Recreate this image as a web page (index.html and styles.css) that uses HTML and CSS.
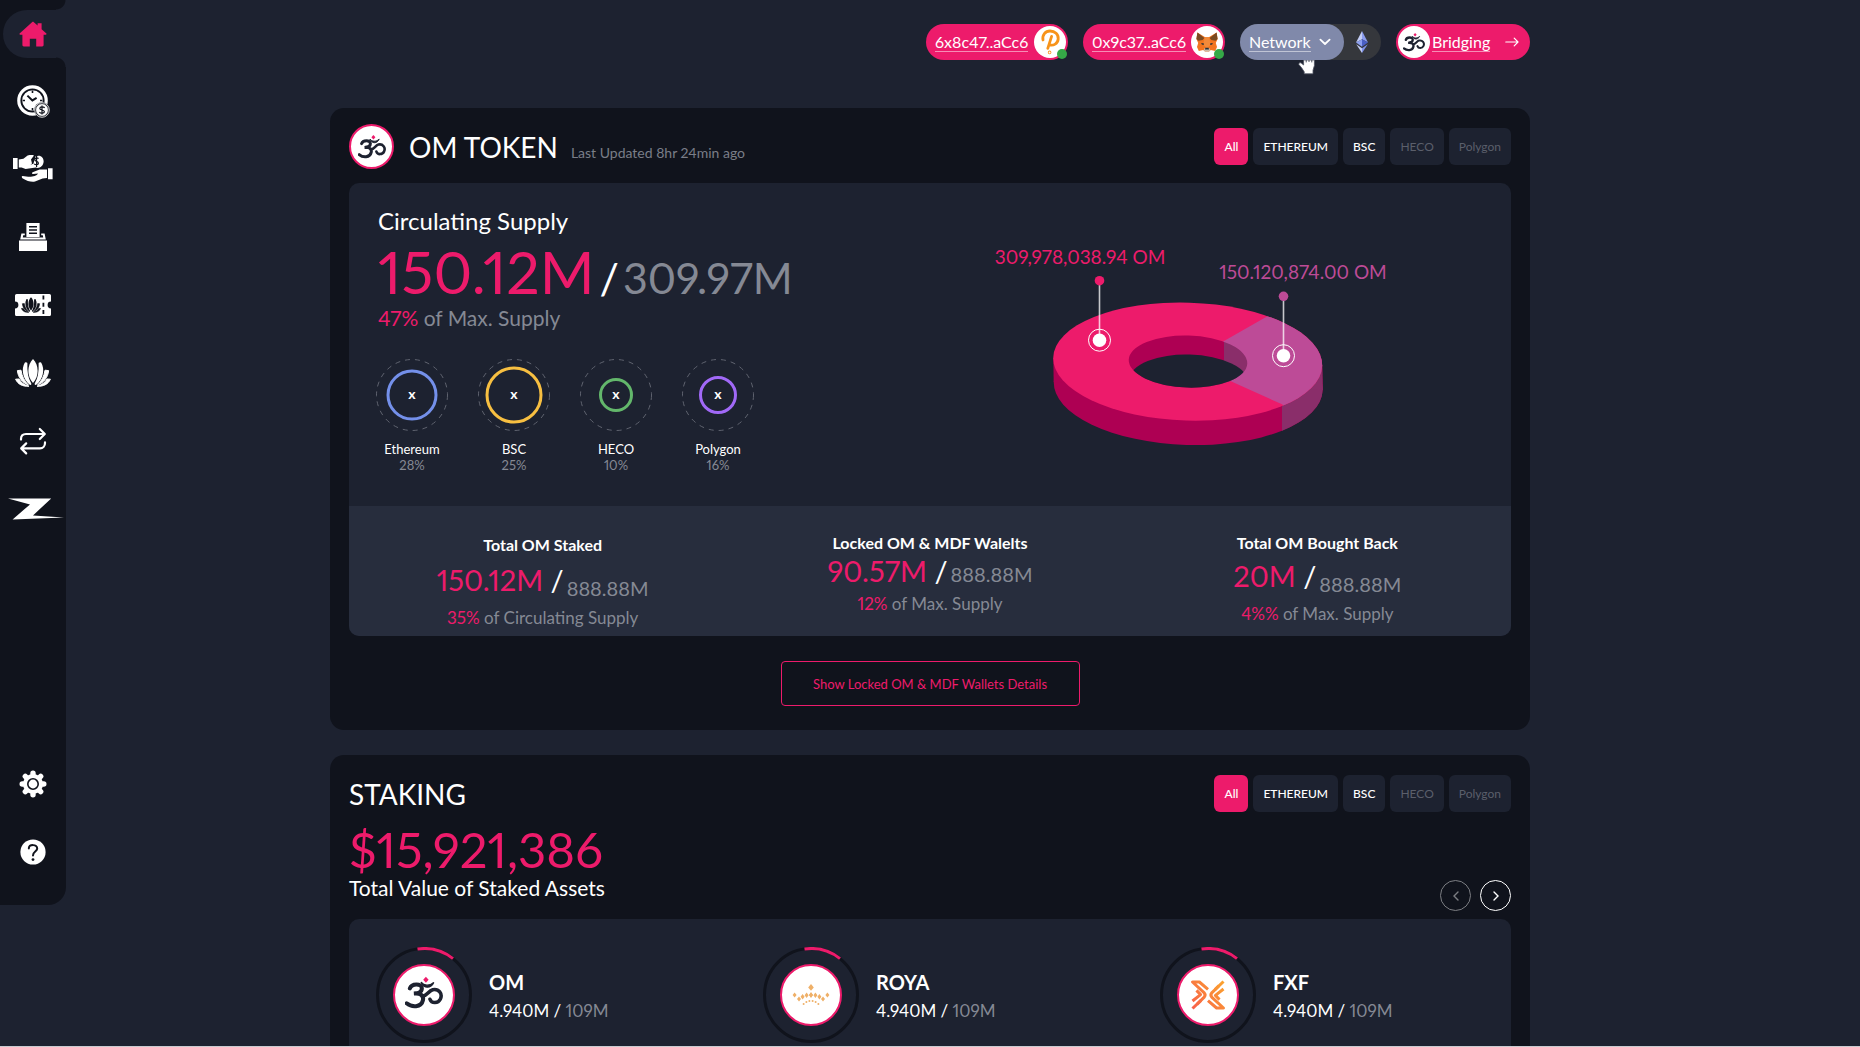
FILE: index.html
```html
<!DOCTYPE html>
<html lang="en">
<head>
<meta charset="utf-8">
<meta name="viewport" content="width=device-width, initial-scale=1">
<title>OM Dashboard</title>
<link rel="stylesheet" href="styles.css">
</head>
<body>
<svg class="sprite" aria-hidden="true">
  <symbol id="om" viewBox="0 0 28 24">
    <path d="M3.6 8.6C4.8 4.8 12.4 4.6 12.4 8.6C12.4 11.6 9 12.4 6.6 12.4C11.4 11.8 14 14 13.2 17.4C12 22.8 5 22.8 1.2 19.6" fill="none" stroke="#1d2230" stroke-width="3" stroke-linecap="round"/>
    <path d="M12.6 14.2C16.2 14.8 17 10.4 20.4 9.6C24.8 8.6 28 12.6 26 16.6C24.4 19.8 19.6 20 18.4 16.6" fill="none" stroke="#1d2230" stroke-width="2.6" stroke-linecap="round"/>
    <path d="M11.8 4C14 6.8 18 7 21.2 4.2C19 8.8 14 9 11.8 4Z" fill="#1d2230" stroke="#1d2230"/>
    <path d="M15.4 0L17.4 2.2L15.4 4.4L13.4 2.2Z" fill="#ed1b6b"/>
  </symbol>
  <symbol id="lotus" viewBox="0 0 36 28">
    <path d="M18 0C24 6 24.400 17 18 24C11.600 17 12 6 18 0Z"/>
    <path d="M10.600 4.200C7.200 10 8.600 20 15.400 25C11.600 18.600 11 12 11.400 4.400ZM25.400 4.200C28.800 10 27.400 20 20.600 25C24.400 18.600 25 12 24.600 4.400Z" stroke="currentColor" stroke-width="2" stroke-linejoin="round"/>
    <path d="M2.400 11.600C3 18.400 7.400 24 13.400 26C9.400 22 7 17.600 6 11.200ZM33.600 11.600C33 18.400 28.600 24 22.600 26C26.600 22 29 17.600 30 11.200Z" stroke="currentColor" stroke-width="1" stroke-linejoin="round"/>
    <path d="M.6 20.200C3 25.600 8 27.600 14 27.200C9.200 26 6 23.600 4 20ZM35.400 20.200C33 25.600 28 27.600 22 27.200C26.800 26 30 23.600 32 20Z" stroke="currentColor" stroke-width="1" stroke-linejoin="round"/>
  </symbol>
</svg>

<div class="app">
  <nav class="sidebar" aria-label="Main">
    <ul class="nav">
      <li class="nav-item nav-item-active"><a href="#home" aria-label="Home">
        <svg width="28" height="26" viewBox="0 0 28 26" fill="#ed1b6b"><path d="M14 .6L18.600 4.600V2.200H22.600V8.200L27.400 12.600C27.800 13.200 27.400 13.800 26.800 13.800H24.600V24C24.600 24.800 24 25.400 23.200 25.400H17.200V17.800H10.800V25.400H4.800C4 25.400 3.400 24.800 3.400 24V13.800H1.200C.6 13.800.2 13.200.6 12.600L13 1.200Z"/></svg></a></li>
      <li class="nav-item"><a href="#stake" aria-label="Staking time">
        <svg width="33" height="33" viewBox="0 0 33 33"><circle cx="15.500" cy="15.500" r="15.300" fill="#fff"/><circle cx="15.500" cy="15.500" r="11.200" fill="none" stroke="#10131c" stroke-width="1.800"/><path d="M15.500 5.600V8M15.500 23V25.400M5.600 15.500H8M23 15.500H25.400" stroke="#10131c" stroke-width="1.600"/><path d="M10.400 10.600L15.400 15.400L19.600 12.800" fill="none" stroke="#10131c" stroke-width="2"/><circle cx="25" cy="25" r="7.800" fill="#10131c"/><circle cx="25" cy="25" r="6.400" fill="#fff" stroke="#10131c" stroke-width=".8"/><circle cx="25" cy="25" r="7.300" fill="none" stroke="#fff" stroke-width=".8"/><path d="M27.600 23C26.800 21.400 22.800 21.600 22.800 23.400C22.800 25.600 27.400 24.400 27.400 26.800C27.400 28.600 23.200 28.600 22.400 27M25 20.600V29.400" fill="none" stroke="#10131c" stroke-width="1.200"/></svg></a></li>
      <li class="nav-item"><a href="#lend" aria-label="Lending">
        <svg width="40" height="28" viewBox="0 0 40 28" fill="#fff"><path d="M0 3H4.600V14H0ZM5.800 4.400L10.400 3.800L14.600 .6C17 0 19.600 0 21 .4L18 4.600L19 8.400L17.400 9.800L20.400 8.800L22.600 1.200C28 -.8 31 2.800 30.600 7C30 11.400 26.400 13.800 22.800 12.600L12.600 14L8.600 12.400H5.800Z"/><path d="M25.600 3.600C24 2.400 21.600 3 21.800 4.800C22 6.800 25.400 6 25.400 8.200C25.400 10 22.400 10.200 21.200 8.800M23.600 1V12" fill="none" stroke="#10131c" stroke-width="1.200"/><path d="M35 13.200H39.600V24.200H35ZM34 14.400H26.600L19.600 17.200C18.600 18 19 19 20.200 19L25 18.600C23.800 21.400 19.200 22 15.200 21.800L9.600 21C8.400 21 8.600 22.600 9.400 23.200C14 26.200 18.200 27.200 22 26.600L29.600 23.600L34 23Z"/></svg></a></li>
      <li class="nav-item"><a href="#vote" aria-label="Governance">
        <svg width="28" height="28" viewBox="0 0 28 28" fill="#fff"><path d="M0 17.600H28V28H0ZM7.400 0H20.600V14H7.400ZM1.200 16.400L2.400 10.400H5.800V12.200H4.200L3.800 14.600H24.200L23.800 12.200H22.200V10.400H25.600L26.800 16.400Z"/><path d="M10 3.800H18M10 7H18M10 10.200H18" stroke="#10131c" stroke-width="1.400"/></svg></a></li>
      <li class="nav-item"><a href="#lottery" aria-label="Lottery tickets">
        <svg width="36" height="22" viewBox="0 0 36 22"><path d="M1.600 0H34.400A1.600 1.600 0 0 1 36 1.600V7.600A3.400 3.400 0 0 0 36 14.400V20.400A1.600 1.600 0 0 1 34.400 22H1.600A1.600 1.600 0 0 1 0 20.400V14.400A3.400 3.400 0 0 0 0 7.600V1.600A1.600 1.600 0 0 1 1.600 0Z" fill="#fff"/><path d="M28.400 1.600V22" stroke="#10131c" stroke-width="1.800" stroke-dasharray="4 3.200"/><svg x="6" y="3" width="20" height="16" color="#10131c" fill="#10131c"><use href="#lotus"/></svg></svg></a></li>
      <li class="nav-item"><a href="#nirvana" aria-label="Pools"><svg width="36" height="28" color="#fff" fill="#fff"><use href="#lotus"/></svg></a></li>
      <li class="nav-item"><a href="#swap" aria-label="Swap">
        <svg width="28" height="28" viewBox="0 0 28 28" fill="none" stroke="#fff" stroke-width="2.200" stroke-linecap="round" stroke-linejoin="round"><path d="M2 12.600V12C2 9 4 7 7 7H25.600M20.800 2L25.800 7L20.800 12M26 15.400V16C26 19 24 21.400 21 21.400H2.400M7.200 16.400L2.200 21.400L7.200 26.400"/></svg></a></li>
      <li class="nav-item nav-item-wide"><a href="#zendit" aria-label="Zendit">
        <svg width="56" height="22" viewBox="0 0 56 22" fill="#fff"><path d="M0 .4H43.200L25 17.400L56 19.600L4.600 21.400L22 6.400Z"/></svg></a></li>
    </ul>
    <ul class="nav nav-foot">
      <li class="nav-item"><a href="#settings" aria-label="Settings">
        <svg width="28" height="28" viewBox="-14 -14 28 28"><g stroke="#fff" stroke-width="5.400" stroke-linecap="round"><path d="M0 -10.800V10.800M-10.800 0H10.800M-7.700 -7.700L7.700 7.700M7.700 -7.700L-7.700 7.700"/></g><circle r="10" fill="#fff"/><circle r="5.200" fill="#fff" stroke="#10131c" stroke-width="1.600"/></svg></a></li>
      <li class="nav-item"><a href="#help" aria-label="Help">
        <svg width="26" height="26" viewBox="0 0 26 26"><circle cx="13" cy="13" r="12.600" fill="#fff"/><path d="M8.800 9.400C9 5 17.400 5 17.200 9.600C17 12.600 13 12.600 13 16.400" fill="none" stroke="#10131c" stroke-width="2" stroke-linecap="round"/><circle cx="13" cy="20.600" r="1.400" fill="#10131c"/></svg></a></li>
    </ul>
  </nav>

  <main class="main">
    <header class="topbar">
      <button class="pill wallet" type="button"><span class="pill-text">6x8c47..aCc6</span>
        <span class="pill-logo online"><svg width="32" height="32" viewBox="0 0 32 32" fill="none" stroke="#f7931a" stroke-width="2.800" stroke-linecap="round"><path d="M9 14C8 9 11.400 5 16 5C21 5 24.600 8.600 24.200 13C23.800 17.600 19.600 20 15 18.800M17.600 10.400L13.800 22.400"/><circle cx="15.600" cy="26.400" r=".4"/></svg></span></button>
      <button class="pill wallet" type="button"><span class="pill-text">0x9c37..aCc6</span>
        <span class="pill-logo online"><svg width="32" height="32" viewBox="0 0 32 32"><path d="M6.400 6.400L13.800 11H18.200L25.600 6.400L26.600 13L24.800 17L26 21L24.200 25L19.800 24L18 25.600H14L12.200 24L7.800 25L6 21L7.200 17L5.400 13Z" fill="#f2751f"/><path d="M6.400 6.400L13.400 12L11.600 14L7.400 14.800L5.400 13ZM25.600 6.400L18.600 12L20.400 14L24.600 14.800L26.600 13Z" fill="#7a4a22"/><path d="M13.800 11H18.200L19.800 18.400L16 22.400L12.200 18.400Z" fill="#f28a3a"/><path d="M13.400 22.200H18.600L19.200 24.200L18 25.600H14L12.800 24.200Z" fill="#c9b8a8"/><path d="M10.200 17L13 17.600L12.600 19L10.800 18.600ZM21.800 17L19 17.600L19.400 19L21.200 18.600ZM14.400 21.800H17.600L18 23.400H14Z" fill="#24303a"/></svg></span></button>
      <div class="network">
        <button class="network-menu" type="button" aria-haspopup="listbox"><span class="pill-text">Network</span>
          <svg width="12" height="8" viewBox="0 0 12 8" fill="none" stroke="#fff" stroke-width="1.800" stroke-linecap="round" stroke-linejoin="round"><path d="M1.400 1.600L6 6L10.600 1.600"/></svg></button>
        <svg class="network-coin" width="12" height="22" viewBox="0 0 12 18" preserveAspectRatio="none"><path d="M6 0L0 9.400L6 6.800Z" fill="#c3cdf5"/><path d="M6 0L12 9.400L6 6.800Z" fill="#8b9cee"/><path d="M6 6.800L0 9.400L6 12.800Z" fill="#8c9ff0"/><path d="M6 6.800L12 9.400L6 12.800Z" fill="#4a5fc4"/><path d="M.2 10.800L6 18V14.200Z" fill="#c3cdf5"/><path d="M11.800 10.800L6 18V14.200Z" fill="#7f92ea"/></svg>
        <svg class="cursor" width="18" height="15" viewBox="0 0 18 15"><path d="M5.600 0H16.400V5.600L15 10.200V13.800H6.200V11.800L3.600 7.800L.8 4.400C.6 2.800 2.400 2.400 3.400 3.200L5.600 5Z" fill="#fff" stroke="#4c5060" stroke-width=".8"/><path d="M8.200 0V2.400M11 0V2M13.800 0V2.400" stroke="#4c5060"/></svg>
      </div>
      <a class="pill bridging" href="#bridge"><span class="pill-logo"><svg width="22" height="19"><use href="#om"/></svg></span><span class="pill-text">Bridging</span>
        <svg class="bridging-arrow" width="14" height="10" viewBox="0 0 14 10" fill="none" stroke="#fff" stroke-width="1.200" stroke-linecap="round" stroke-linejoin="round"><path d="M.8 5H13M9.200 1.200L13 5L9.200 8.800"/></svg></a>
    </header>

    <section class="card token-card">
      <header class="card-head">
        <span class="token-logo"><svg width="28" height="24"><use href="#om"/></svg></span>
        <h1 class="card-title">OM TOKEN</h1>
        <p class="updated">Last Updated 8hr 24min ago</p>
        <div class="tabs">
          <button class="tab tab-active" type="button">All</button>
          <button class="tab" type="button">ETHEREUM</button>
          <button class="tab" type="button">BSC</button>
          <button class="tab" type="button" disabled>HECO</button>
          <button class="tab" type="button" disabled>Polygon</button>
        </div>
      </header>

      <div class="panel">
        <div class="supply">
          <div class="supply-info">
            <h2 class="supply-title">Circulating Supply</h2>
            <p class="supply-figures"><span class="pink">150.12M</span><span class="supply-max"><span class="slash">/</span>309.97M</span></p>
            <p class="supply-note"><span class="pink">47%</span> of Max. Supply</p>
            <ul class="chains">
              <li class="chain"><svg width="72" height="72" viewBox="-36 -36 72 72"><circle class="orbit" r="35.500"/><circle class="ring" r="24" stroke="#7490ea"/><text class="ring-mark" y="4">x</text></svg><span>Ethereum</span><span class="muted">28%</span></li>
              <li class="chain"><svg width="72" height="72" viewBox="-36 -36 72 72"><circle class="orbit" r="35.500"/><circle class="ring" r="27" stroke="#f7bf41"/><text class="ring-mark" y="4">x</text></svg><span>BSC</span><span class="muted">25%</span></li>
              <li class="chain"><svg width="72" height="72" viewBox="-36 -36 72 72"><circle class="orbit" r="35.500"/><circle class="ring" r="15.500" stroke="#63b76b"/><text class="ring-mark" y="4">x</text></svg><span>HECO</span><span class="muted">10%</span></li>
              <li class="chain"><svg width="72" height="72" viewBox="-36 -36 72 72"><circle class="orbit" r="35.500"/><circle class="ring" r="17.500" stroke="#a169f7"/><text class="ring-mark" y="4">x</text></svg><span>Polygon</span><span class="muted">16%</span></li>
            </ul>
          </div>

          <svg class="donut" width="400" height="210" viewBox="0 0 400 210" role="img" aria-label="Supply split">
            <defs>
              <clipPath id="face"><ellipse cx="197.700" cy="121.600" rx="134.500" ry="59" transform="rotate(1.8 197.700 121.600)"/></clipPath>
              <clipPath id="hole"><ellipse cx="198" cy="121.600" rx="59.300" ry="26" transform="rotate(1.800 198 121.600)"/></clipPath>
              <clipPath id="slice-side"><path d="M292 100H340V210H292Z"/></clipPath>
            </defs>
            <g fill="#ae0053"><ellipse cx="198.200" cy="146" rx="134.500" ry="59" transform="rotate(1.800 198.200 146)"/><path d="M63.300 118L332.200 125L332.800 150L63.700 142Z"/></g>
            <g clip-path="url(#slice-side)" fill="#8a2e6a"><ellipse cx="198.200" cy="146" rx="134.500" ry="59" transform="rotate(1.800 198.200 146)"/><path d="M63.300 118L332.200 125L332.800 150L63.700 142Z"/></g>
            <g clip-path="url(#face)"><path d="M50 50H350V200H50Z" fill="#ed1b6b"/><path d="M234 101L278.700 75.500L300 40H350V200H330L292 164.300L240.300 141L200 121Z" fill="#bd4b97"/></g>
            <g clip-path="url(#hole)"><path d="M130 90H234V160H130Z" fill="#ae0053"/><path d="M234 90H270V160H234Z" fill="#8a2e6a"/><ellipse cx="199" cy="140.600" rx="59.300" ry="26" fill="#1d2230" transform="rotate(1.800 199 140.600)"/></g>
            <path d="M109.500 45V100M293.500 60V116" stroke="#fff" stroke-opacity=".75" stroke-width="1.600"/>
            <circle cx="109.500" cy="40.700" r="4.800" fill="#ed1b6b"/><circle cx="293.500" cy="56.300" r="4.800" fill="#bd4b97"/>
            <g fill="#fff"><circle cx="109.500" cy="100.200" r="6.800"/><circle cx="293.500" cy="115.700" r="6.800"/></g>
            <g fill="none" stroke="#fff"><circle cx="109.500" cy="100.200" r="11"/><circle cx="293.500" cy="115.700" r="11"/></g>
            <text class="donut-label" x="90" y="24" fill="#ed1b6b">309,978,038.94 OM</text>
            <text class="donut-label" x="313" y="39" fill="#bd4b97">150.120,874.00 OM</text>
          </svg>
        </div>

        <div class="stats">
          <div class="stat stat-spaced stat-low">
            <h3>Total OM Staked</h3>
            <p class="stat-figures"><span class="pink">150.12M</span> <span class="slash">/</span><span class="stat-max">888.88M</span></p>
            <p class="stat-note"><span class="pink">35%</span> of Circulating Supply</p>
          </div>
          <div class="stat">
            <h3>Locked OM &amp; MDF Walelts</h3>
            <p class="stat-figures"><span class="pink">90.57M</span> <span class="slash">/</span><span class="stat-max">888.88M</span></p>
            <p class="stat-note"><span class="pink">12%</span> of Max. Supply</p>
          </div>
          <div class="stat stat-spaced">
            <h3>Total OM Bought Back</h3>
            <p class="stat-figures"><span class="pink">20M</span> <span class="slash">/</span><span class="stat-max">888.88M</span></p>
            <p class="stat-note"><span class="pink">4%%</span> of Max. Supply</p>
          </div>
        </div>
      </div>
      <button class="details" type="button">Show Locked OM &amp; MDF Wallets Details</button>
    </section>

    <section class="card staking-card">
      <header class="card-head">
        <h1 class="card-title">STAKING</h1>
        <div class="tabs">
          <button class="tab tab-active" type="button">All</button>
          <button class="tab" type="button">ETHEREUM</button>
          <button class="tab" type="button">BSC</button>
          <button class="tab" type="button" disabled>HECO</button>
          <button class="tab" type="button" disabled>Polygon</button>
        </div>
      </header>
      <div class="staked">
        <div class="staked-total">
          <p class="staked-amount pink">$15,921,386</p>
          <p class="staked-note">Total Value of Staked Assets</p>
        </div>
        <div class="pager">
          <button class="page-btn" type="button" aria-label="Previous" disabled><svg width="6" height="10" viewBox="0 0 6 10"><path d="M5 1L1 5L5 9"/></svg></button>
          <button class="page-btn" type="button" aria-label="Next"><svg width="6" height="10" viewBox="0 0 6 10"><path d="M1 1L5 5L1 9"/></svg></button>
        </div>
      </div>
      <div class="panel tokens">
        <article class="token">
          <svg width="96" height="96" viewBox="-48 -48 96 96"><circle class="track" r="46.500"/><path class="arc" d="M-6.500 -46A46.500 46.500 0 0 1 29 -36.400"/><circle class="disc" r="30"/><svg x="-19" y="-19" width="38" height="34"><use href="#om"/></svg></svg>
          <div><h3>OM</h3><p>4.940M / <span class="muted">109M</span></p></div>
        </article>
        <article class="token">
          <svg width="96" height="96" viewBox="-48 -48 96 96"><circle class="track" r="46.500"/><path class="arc" d="M-6.500 -46A46.500 46.500 0 0 1 29 -36.400"/><circle class="disc" r="30"/>
            <g fill="#efb068"><path d="M0 -11L2.800 -7.600L0 -4.200L-2.800 -7.600Z"/><g id="crown"><path d="M0 -2.800L2 0L0 2.800L-2 0ZM4.400 -2.600L6.400 .2L4.400 3L2.400 .2ZM8.400 -1L10.400 1.800L8.400 4.600L6.400 1.800ZM12 1.400L14 4L12 6.600L10 4ZM16.400 -2.600L18.400 0L16.400 2.600L14.400 0Z"/><circle cx="1.600" cy="6" r="1"/><circle cx="4.600" cy="7" r="1"/><circle cx="7.400" cy="9" r="1"/></g><use href="#crown" transform="scale(-1 1)"/></g></svg>
          <div><h3>ROYA</h3><p>4.940M / <span class="muted">109M</span></p></div>
        </article>
        <article class="token">
          <svg width="96" height="96" viewBox="-48 -48 96 96"><defs><linearGradient id="fxf" gradientUnits="userSpaceOnUse" x1="-16" y1="13" x2="16" y2="-13"><stop offset="0" stop-color="#f8604a"/><stop offset="1" stop-color="#fba32e"/></linearGradient></defs><circle class="track" r="46.500"/><path class="arc" d="M-6.500 -46A46.500 46.500 0 0 1 29 -36.400"/><circle class="disc" r="30"/>
            <g fill="none" stroke="url(#fxf)" stroke-width="3" stroke-linejoin="round"><path d="M-15.500 13.500L-4 2.400C-2.600 .8 -2.600 -1 -4 -2.400L-15.500 -13H-8.600L0 -5.600"/><path d="M-15.500 6L-7.400 -.4L-11.500 -4.600M-11 9.400L-7 5.400"/><path d="M15.500 -13.500L4 -2.400C2.600 -.8 2.600 1 4 2.400L15.500 13H8.600L0 5.600"/><path d="M15.500 -6L7.400 .4L11.500 4.600M11 -9.400L7 -5.400"/></g></svg>
          <div><h3>FXF</h3><p>4.940M / <span class="muted">109M</span></p></div>
        </article>
      </div>
    </section>
  </main>
</div>
</body>
</html>
```
FILE: styles.css
```css
:root {
  --page: #1d2230;
  --dark: #10131c;
  --band: #272d3d;
  --pink: #ed1b6b;
  --muted: #858994;
}

* { box-sizing: border-box; }

body, h1, h2, h3, p, ul { margin: 0; padding: 0; }

ul { list-style: none; }

body {
  background: var(--page);
  color: #fff;
  font-family: Lato, "Open Sans", sans-serif;
  font-variant-numeric: proportional-nums;
}

button { border: 0; color: inherit; font: inherit; cursor: pointer; }

a { color: inherit; text-decoration: none; }

svg { display: block; flex: none; }

.sprite { position: absolute; width: 0; height: 0; }

.pink { color: var(--pink); }
.muted { color: var(--muted); }

.app {
  display: grid;
  grid-template-columns: 66px minmax(0, 1fr) 66px;
  align-items: start;
  height: 100vh;
  overflow: hidden;
  border-bottom: 1px solid #c9cbd0;
}

/* Sidebar */
.sidebar {
  background: var(--dark);
  border-radius: 0 0 18px 0;
  padding-bottom: 19px;
}

.nav-foot { margin-top: 207px; }

.nav-item { display: flex; height: 68px; }

.nav-item a {
  display: flex;
  flex: 1;
  align-items: center;
  justify-content: center;
}

.nav-item-wide a { padding-left: 5px; }

.nav-item-active {
  position: relative;
  height: 67px;
  padding: 10px 0 9px 3px;
}

.nav-item-active a {
  background: var(--page);
  border-radius: 24px 0 0 24px;
  padding-right: 3px;
}

.nav-item-active::before,
.nav-item-active::after {
  content: "";
  position: absolute;
  right: 0;
  width: 10px;
  height: 10px;
}

.nav-item-active::before {
  top: 0;
  background: radial-gradient(circle at 0 0, var(--dark) 9px, var(--page) 10px);
}

.nav-item-active::after {
  bottom: 0;
  background: radial-gradient(circle at 0 100%, var(--dark) 9px, var(--page) 10px);
}

/* Main column */
.main {
  display: flex;
  flex-direction: column;
  width: 100%;
  max-width: 1200px;
  margin: 0 auto;
  padding-top: 24px;
}

.topbar {
  display: flex;
  justify-content: flex-end;
  gap: 15px;
  margin-bottom: 48px;
  font-size: 16px;
}

.pill {
  display: flex;
  align-items: center;
  height: 36px;
  border-radius: 18px;
  background: var(--pink);
}

.wallet {
  justify-content: space-between;
  width: 142px;
  padding: 0 2px 0 9px;
}

.pill-text {
  line-height: 18px;
  border-bottom: 1px solid rgb(255 255 255 / 50%);
}

.pill-logo {
  position: relative;
  display: grid;
  place-items: center;
  width: 32px;
  height: 32px;
  border-radius: 50%;
  background: #fff;
}

.online::after {
  content: "";
  position: absolute;
  right: -1px;
  bottom: -1px;
  width: 10px;
  height: 10px;
  border-radius: 50%;
  background: #35a947;
}

.network {
  position: relative;
  display: flex;
  align-items: center;
  border-radius: 18px;
  background: #35373c;
  width: 141px;
}

.network-menu {
  display: flex;
  align-items: center;
  justify-content: space-between;
  width: 104px;
  height: 36px;
  padding: 0 13px 0 9px;
  border-radius: 18px;
  background: #8089aa;
}

.network-coin { margin: 0 auto 0 12px; }

.cursor { position: absolute; left: 58px; top: 36px; }

.bridging { width: 134px; padding: 0 11px 0 2px; gap: 2px; }

.bridging-arrow { margin-left: auto; }

.card {
  display: flex;
  flex-direction: column;
  padding: 0 19px 24px;
  border-radius: 14px;
  background: var(--dark);
}

.card + .card { margin-top: 25px; }

.card-head { display: flex; align-items: center; }

.token-card .card-head { padding: 16px 0 14px; }
.staking-card .card-head { padding: 20px 0 13px; }

.token-logo {
  display: grid;
  place-items: center;
  width: 45px;
  height: 45px;
  margin-right: 15px;
  border: 2px solid var(--pink);
  border-radius: 50%;
  background: #fff;
}

.card-title {
  font-size: 28px;
  font-weight: 400;
  line-height: 34px;
}

.updated {
  margin-left: 13px;
  padding-top: 12px;
  color: #7a7e88;
  font-size: 14px;
  line-height: 18px;
}

.tabs { display: flex; gap: 5px; margin-left: auto; }

.tab {
  height: 37px;
  padding: 0 10px;
  border-radius: 6px;
  background: var(--page);
  font-size: 12px;
  font-weight: 500;
}

.tab-active { background: var(--pink); }

.tab:disabled { color: #5b5f6b; font-weight: 400; }

.panel {
  overflow: hidden;
  border-radius: 10px;
  background: var(--page);
}

.supply {
  display: flex;
  align-items: flex-start;
  justify-content: space-between;
  padding: 23px 121px 33px 29px;
}

.supply-title {
  font-size: 24px;
  font-weight: 400;
  line-height: 30px;
}

.supply-figures {
  display: flex;
  align-items: baseline;
  gap: 5px;
  margin-top: 4px;
  font-size: 59px;
  line-height: 64px;
}

.supply-max { color: var(--muted); font-size: 43px; line-height: 42px; }

.slash { color: #fff; }

.supply-max .slash { margin-right: 4px; }

.supply-note {
  margin-top: 2px;
  color: var(--muted);
  font-size: 21px;
  line-height: 24px;
}

.chains {
  display: flex;
  gap: 30px;
  margin: 29px 0 0 -2px;
}

.chain {
  display: flex;
  flex-direction: column;
  align-items: center;
  width: 72px;
  font-size: 13px;
  line-height: 16px;
}

.chain svg { margin-bottom: 10px; }

.orbit { fill: none; stroke: #5f636f; stroke-dasharray: 5 5; }
.ring { fill: none; stroke-width: 3; }

.ring-mark {
  fill: #fff;
  font-size: 14px;
  font-weight: 700;
  text-anchor: middle;
}

.donut { margin-top: 34px; }

.donut-label { font-size: 19px; text-anchor: middle; }

.stats {
  display: grid;
  grid-template-columns: repeat(3, 1fr);
  min-height: 130px;
  padding: 27px 0 7px;
  background: var(--band);
  text-align: center;
}

.stat h3 { font-size: 16px; font-weight: 700; line-height: 20px; }

.stat-figures { font-size: 29px; line-height: 36px; }

.stat-max {
  margin-left: 3px;
  color: var(--muted);
  font-size: 20px;
  line-height: 24px;
}

.stat-note {
  margin-top: 5px;
  color: var(--muted);
  font-size: 17px;
  line-height: 20px;
}

.stat-spaced .stat-figures { margin-top: 5px; }
.stat-spaced .stat-max { vertical-align: -5px; }
.stat-spaced .stat-note { margin-top: 8px; }

.stat-low { padding-top: 2px; }
.stat-low .stat-figures { margin-top: 7px; }

.details {
  align-self: center;
  width: 299px;
  height: 45px;
  margin-top: 25px;
  border: 1px solid var(--pink);
  border-radius: 4px;
  background: transparent;
  color: var(--pink);
  font-size: 13px;
}

/* Staking */
.staked {
  display: flex;
  align-items: flex-end;
  justify-content: space-between;
  margin-bottom: 8px;
}

.staked-total { padding-bottom: 11px; }

.staked-amount { font-size: 49px; line-height: 48px; }

.staked-note { margin-top: 3px; font-size: 21px; line-height: 24px; }

.pager { display: flex; gap: 9px; }

.page-btn {
  display: grid;
  place-items: center;
  width: 31px;
  height: 31px;
  padding: 0;
  border: 1px solid #fff;
  border-radius: 50%;
  background: transparent;
}

.page-btn:disabled { opacity: .45; }

.page-btn path {
  fill: none;
  stroke: #fff;
  stroke-width: 1.4;
  stroke-linecap: round;
}

.tokens {
  display: grid;
  grid-template-columns: 387fr 397fr 378fr;
  padding: 28px 0;
}

.token {
  display: flex;
  align-items: center;
  gap: 17px;
  padding-left: 27px;
}

.token h3 { font-size: 20px; line-height: 24px; }

.token p { margin-top: 7px; font-size: 17px; line-height: 20px; }

.track { fill: none; stroke: var(--dark); stroke-width: 3; }
.arc { fill: none; stroke: var(--pink); stroke-width: 3; }
.disc { fill: #fff; stroke: var(--pink); stroke-width: 2; }
```
